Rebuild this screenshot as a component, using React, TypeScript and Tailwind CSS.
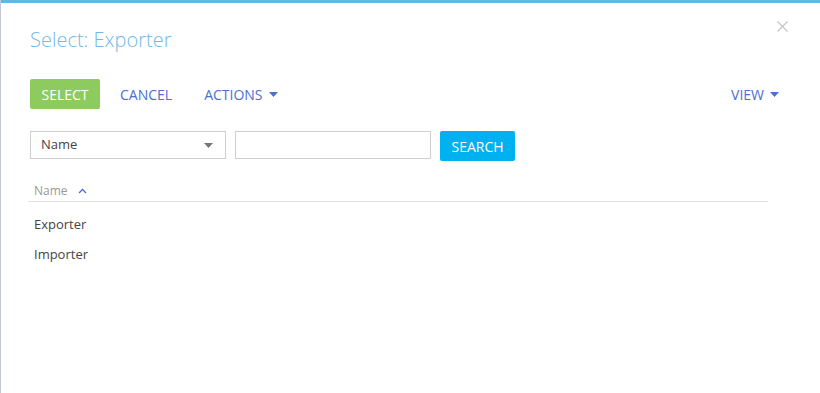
export default function App() {
  const rows = ["Exporter", "Importer"];
  return (
    <div
      className="flex h-[393px] w-[820px] overflow-hidden bg-white"
      style={{ fontFamily: '"Open Sans", "Liberation Sans", sans-serif' }}
    >
      <div className="w-px shrink-0 bg-[#c4c8d4]" />
      <div className="relative flex flex-1 flex-col">
        <div className="h-[3px] bg-[#64b7e3]" />

        {/* Close */}
        <button type="button" className="absolute right-[32px] top-[21px] text-[#c4c4c4]">
          <svg width="11" height="11" viewBox="0 0 11 11" fill="none" stroke="currentColor" strokeWidth="1.2">
            <path d="M0.5 0.5 L10.5 10.5 M10.5 0.5 L0.5 10.5" />
          </svg>
        </button>

        <div className="flex flex-col pl-[29px] pr-[51px]">
          <h1 className="mt-[24px] text-[20px] font-light leading-[26px] text-[#72b9e6]">
            Select: Exporter
          </h1>

          {/* Toolbar */}
          <div className="mt-[26px] flex h-[30px] items-center">
            <button
              type="button"
              className="h-[30px] w-[70px] rounded-[2px] bg-[#8ecb5f] text-[14px] text-white"
            >
              SELECT
            </button>
            <button type="button" className="ml-[20px] text-[14px] text-[#4b6ed1]">
              CANCEL
            </button>
            <button type="button" className="ml-[32px] flex items-center gap-[6px] text-[14px] text-[#4b6ed1]">
              ACTIONS
              <svg width="9" height="5" viewBox="0 0 9 5">
                <path d="M0 0 H9 L4.5 5 Z" fill="#4b6ed1" />
              </svg>
            </button>
            <button type="button" className="ml-auto mr-[-10px] flex items-center gap-[6px] text-[14px] text-[#4b6ed1]">
              VIEW
              <svg width="9" height="5" viewBox="0 0 9 5">
                <path d="M0 0 H9 L4.5 5 Z" fill="#4b6ed1" />
              </svg>
            </button>
          </div>

          {/* Filter */}
          <div className="mt-[22px] flex items-start">
            <div className="flex h-[28px] w-[196px] items-center justify-between border border-[#cfcfcf] pl-[10px] pr-[12px] text-[13px] text-[#444]">
              <span>Name</span>
              <svg width="9" height="5" viewBox="0 0 9 5">
                <path d="M0 0 H9 L4.5 5 Z" fill="#777" />
              </svg>
            </div>
            <input className="ml-[9px] h-[28px] w-[196px] border border-[#cfcfcf] outline-none" />
            <button
              type="button"
              className="ml-[9px] h-[30px] w-[75px] rounded-[2px] bg-[#00b1ef] text-[14px] text-white"
            >
              SEARCH
            </button>
          </div>

          {/* Grid */}
          <div className="ml-[-2px] mt-[19px] w-[740px]">
            <div className="flex h-[22px] items-center gap-[10px] border-b border-[#e2e2e2] pl-[6px] text-[12px] text-[#999]">
              <span>Name</span>
              <svg width="9" height="6" viewBox="0 0 9 6" fill="none" stroke="#4b6ed1" strokeWidth="1.3">
                <path d="M1 5 L4.5 1.5 L8 5" />
              </svg>
            </div>
            {rows.map((r, i) => (
              <div
                key={r}
                className={`flex h-[31px] items-center pl-[6px] text-[13px] text-[#444] ${i === 0 ? "pt-[14px]" : "pt-[12px]"}`}
              >
                {r}
              </div>
            ))}
          </div>
        </div>
      </div>
    </div>
  );
}
